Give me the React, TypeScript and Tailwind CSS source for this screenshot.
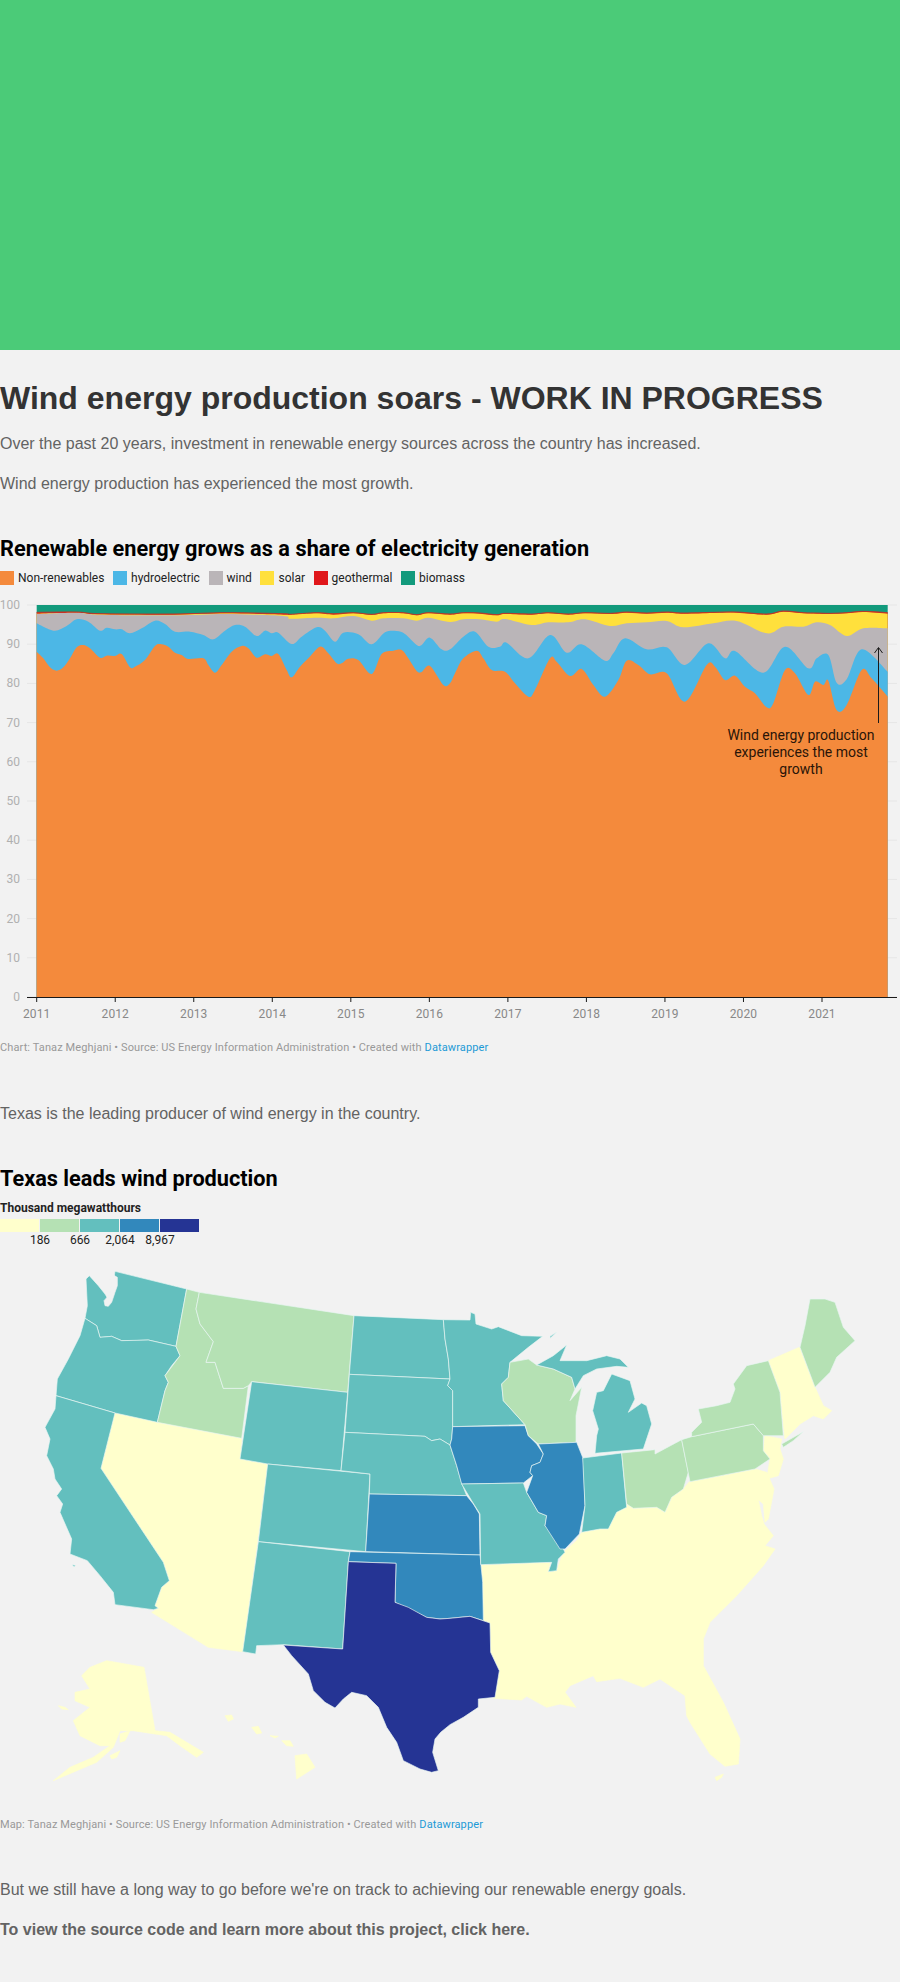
import React from "react";

type P = [number, number];

// Catmull-Rom smoothing through traced boundary points
function smooth(pts: P[]): string {
  let d = `M${pts[0][0]},${pts[0][1]}`;
  for (let i = 0; i < pts.length - 1; i++) {
    const p0 = pts[i - 1] || pts[i];
    const p1 = pts[i];
    const p2 = pts[i + 1];
    const p3 = pts[i + 2] || p2;
    const c1x = p1[0] + (p2[0] - p0[0]) / 6;
    const c1y = p1[1] + (p2[1] - p0[1]) / 6;
    const c2x = p2[0] - (p3[0] - p1[0]) / 6;
    const c2y = p2[1] - (p3[1] - p1[1]) / 6;
    d += `C${c1x},${c1y} ${c2x},${c2y} ${p2[0]},${p2[1]}`;
  }
  return d;
}

const flat = (a: number[]): P[] => {
  const r: P[] = [];
  for (let i = 0; i < a.length; i += 2) r.push([a[i], a[i + 1]]);
  return r;
};

// west half in crop coords x/3, y/3; east half offset by 450
const boundary = (west: number[], east: number[]): P[] => [
  ...flat(west).map(([x, y]) => [x / 3, y / 3] as P),
  ...flat(east).map(([x, y]) => [450 + x / 3, y / 3] as P),
];

const orange = boundary(
  [110,185,130,205,150,232,170,242,190,232,210,205,230,172,250,165,270,175,300,203,320,197,345,198,365,192,390,232,405,230,435,210,465,168,485,163,505,170,525,188,545,195,565,207,610,205,625,225,645,248,665,225,695,185,725,168,745,175,770,203,795,193,815,198,835,192,860,240,875,262,900,230,925,205,960,170,985,190,1010,220,1025,220,1045,206,1075,210,1115,252,1145,192,1180,182,1205,180,1225,205,1250,243,1265,246,1290,228,1330,285],
  [0,280,15,250,40,205,80,182,100,205,125,240,165,245,195,280,235,320,255,300,300,205,320,215,360,258,395,237,430,285,465,320,505,270,530,212,565,225,600,253,650,250,705,335,770,225,795,230,825,270,855,257,885,290,915,310,950,352,970,340,1005,240,1035,250,1075,315,1095,275,1120,285,1135,272,1160,360,1190,345,1235,240,1265,265,1313,320]
);
const blue = boundary(
  [110,100,130,110,165,122,200,108,230,88,265,95,300,122,320,113,345,118,365,118,390,130,425,115,465,92,495,102,525,125,570,125,610,135,640,148,675,122,705,105,735,110,770,138,795,122,815,130,835,128,875,162,905,140,950,112,975,122,1005,155,1030,128,1075,133,1115,163,1155,127,1190,123,1215,132,1250,165,1265,165,1290,143,1325,178],
  [0,178,40,140,75,125,115,170,150,170,170,158,235,205,300,135,350,188,395,163,465,212,490,190,525,145,590,178,650,172,705,225,775,160,825,205,855,183,940,248,1005,170,1075,235,1100,205,1135,195,1160,278,1190,268,1235,178,1313,245]
);
const gray = boundary(
  [110,72,230,68,300,74,520,76,680,72,850,78,870,86,950,83,1000,85,1060,78,1115,92,1150,85,1210,85,1250,92,1285,83,1350,96],
  [40,88,90,88,140,95,165,87,245,105,295,97,355,97,405,88,480,108,530,100,590,97,650,93,700,112,790,100,860,93,950,130,1000,110,1060,110,1100,97,1140,105,1190,138,1240,115,1313,115]
);
const yellow = boundary(
  [110,71,230,68,300,73,520,74,680,70,850,74,870,74,950,70,1000,74,1060,70,1115,75,1150,70,1210,70,1250,76,1285,70,1350,74],
  [40,70,90,71,140,76,165,72,245,74,295,70,355,74,405,70,480,72,530,68,590,71,650,68,700,71,790,69,860,68,950,74,1000,65,1060,70,1100,71,1140,72,1190,70,1240,66,1313,71]
);
const red = boundary(
  [110,67,230,66,300,71,520,72,680,68,850,71,870,73,950,68,1000,71,1060,68,1115,73,1150,68,1210,68,1250,74,1285,68,1350,72],
  [40,68,90,69,140,74,165,70,245,72,295,68,355,72,405,68,480,70,530,66,590,69,650,66,700,69,790,67,860,66,950,72,1000,63,1060,68,1100,69,1140,70,1190,68,1240,64,1313,68]
);

const area = (pts: P[]) => `${smooth(pts)}L${pts[pts.length - 1][0]},407L${pts[0][0]},407Z`;

const years = [2011, 2012, 2013, 2014, 2015, 2016, 2017, 2018, 2019, 2020, 2021];
const yticks = [100, 90, 80, 70, 60, 50, 40, 30, 20, 10, 0];

function AreaChart() {
  return (
    <svg width="900" height="440" viewBox="0 0 900 440" className="block">
      {yticks.map((v) => {
        const y = 407 - v * 3.92;
        return (
          <g key={v}>
            <line x1="27" x2="897" y1={y} y2={y} stroke="#e6e6e6" strokeWidth="1" />
            <text x="20" y={y + 4} textAnchor="end" fontSize="12" fill="#b0b0b0" fontFamily="Roboto, sans-serif">{v}</text>
          </g>
        );
      })}
      <rect x="36.7" y="15" width="851" height="392" fill="#129a7c" />
      <path d={area(red)} fill="#d8281f" />
      <path d={area(yellow)} fill="#ffe03c" />
      <path d={area(gray)} fill="#bab5b8" />
      <path d={area(blue)} fill="#4cb7e6" />
      <path d={area(orange)} fill="#f48a3c" />
      <path d={smooth(red)} fill="none" stroke="#b8392a" strokeWidth="1" />
      <line x1="27" x2="897" y1="407.5" y2="407.5" stroke="#1a1a1a" strokeWidth="1" />
      {years.map((yr, i) => {
        const x = 36.7 + i * 78.53;
        return (
          <g key={yr}>
            <line x1={x} x2={x} y1="407" y2="412" stroke="#1a1a1a" strokeWidth="1" />
            <text x={x} y="428" textAnchor="middle" fontSize="12" letterSpacing="0.1" fill="#888888" fontFamily="Roboto, sans-serif">{yr}</text>
          </g>
        );
      })}
      <path d="M878.5,133V58M874.5,63L878.5,57.5L882.5,63" fill="none" stroke="#1a1a1a" strokeWidth="1" />
      <g fontSize="14" fill="#2a1508" textAnchor="middle" fontFamily="Roboto, sans-serif">
        <text x="801" y="150">Wind energy production</text>
        <text x="801" y="167">experiences the most</text>
        <text x="801" y="184">growth</text>
      </g>
    </svg>
  );
}

const C = { y: "#ffffcc", g: "#b5e1b4", t: "#63bfbe", b: "#3288bc", d: "#253494" };
const BG = "#f2f2f2";

const poly = (a: number[]) => {
  const r: string[] = [];
  for (let i = 0; i < a.length; i += 2) r.push(`${a[i]},${a[i + 1]}`);
  return r.join(" ");
};

const states: { f: string; p: number[] }[] = [
  // South block and north-east yellow areas first
  { f: C.y, p: [1442,917,1650,910,1645,938,1670,935,1690,880,1730,845,1745,820,1800,810,1825,810,1850,760,1880,735,1970,745,1995,760,2015,715,2050,690,2068,668,2265,630,2300,640,2322,690,2305,780,2295,790,2290,735,2275,722,2285,770,2292,795,2320,830,2295,860,2325,870,2290,920,2210,1010,2130,1090,2110,1140,2110,1220,2170,1330,2220,1440,2215,1515,2175,1522,2130,1485,2070,1390,2060,1370,2055,1310,1980,1260,1930,1285,1860,1258,1790,1268,1780,1250,1710,1280,1695,1300,1728,1345,1680,1335,1640,1345,1580,1312,1565,1323,1480,1318,1498,1235,1472,1180,1470,1092,1450,1085,1448,970] },
  { f: C.y, p: [2145,1555,2170,1545,2165,1555,2150,1565] },
  { f: C.y, p: [2295,530,2345,540,2340,570,2350,600,2335,650,2300,660,2310,600,2290,575] },
  { f: C.y, p: [2305,305,2398,265,2445,385,2470,440,2495,455,2470,480,2440,470,2400,495,2355,540,2340,400] },
  { f: C.y, p: [345,462,725,538,720,600,803,615,728,1178,625,1165,455,1060,475,1048,465,1040,485,985,508,965,490,910,303,628] },
  // West
  { f: C.t, p: [345,37,560,90,528,262,445,243,400,245,365,245,335,232,300,235,290,200,255,178,262,140,258,60,268,50,295,80,315,105,330,130,345,37] },
  { f: BG, p: [325,55,340,48,352,55,352,80,345,100,335,130,325,142,315,140,312,125,330,105,335,70] },
  { f: C.t, p: [255,178,290,200,300,235,335,232,365,245,445,243,528,262,540,290,515,320,495,350,505,370,495,395,472,490,345,462,168,410,172,360,205,300,240,230] },
  { f: C.t, p: [168,410,345,462,303,628,490,910,508,965,485,985,465,1040,475,1048,460,1052,345,1037,340,1000,300,950,262,905,210,885,215,840,180,760,188,735,170,710,185,690,165,660,160,630,140,590,150,540,135,505,165,450] },
  { f: C.t, p: [218,917,226,919,224,923,219,922] },
  { f: C.g, p: [560,90,598,100,588,150,600,195,640,248,618,310,645,310,670,388,730,388,745,380,725,538,472,490,495,395,505,370,495,350,540,290,528,262] },
  { f: C.g, p: [598,100,1062,170,1043,400,755,368,745,380,730,388,670,388,645,310,618,310,640,248,600,195,588,150] },
  { f: C.t, p: [755,368,1043,400,1023,635,803,615,720,600] },
  { f: C.t, p: [803,615,1110,645,1097,878,775,848] },
  { f: C.t, p: [775,848,1050,878,1045,908,1028,1170,850,1157,770,1160,767,1185,728,1178] },
  { f: C.t, p: [1062,170,1330,182,1335,240,1345,300,1350,360,1048,346] },
  { f: C.t, p: [1048,346,1350,360,1343,380,1358,395,1358,503,1355,540,1350,558,1320,540,1295,545,1275,532,1035,520] },
  { f: C.t, p: [1035,520,1275,532,1295,545,1320,540,1350,558,1370,620,1385,672,1400,710,1108,705,1110,645,1023,635] },
  { f: C.b, p: [1108,705,1400,710,1420,735,1438,765,1440,888,1097,878] },
  { f: C.b, p: [1050,878,1440,888,1448,970,1450,1085,1410,1072,1350,1078,1320,1080,1280,1075,1185,1030,1188,913,1045,908] },
  { f: C.d, p: [1045,908,1188,913,1185,1030,1225,1045,1280,1075,1320,1080,1350,1078,1410,1072,1470,1092,1472,1180,1498,1235,1485,1315,1435,1320,1435,1345,1390,1375,1350,1397,1322,1420,1305,1440,1298,1480,1315,1535,1295,1540,1260,1530,1210,1505,1190,1450,1160,1405,1135,1345,1100,1310,1055,1300,1030,1320,1005,1347,975,1330,940,1295,925,1245,875,1190,850,1158,1028,1170] },
  // Midwest
  { f: C.t, p: [1330,182,1410,183,1412,160,1425,165,1428,195,1475,210,1495,203,1565,230,1628,232,1585,265,1530,310,1525,355,1505,375,1510,425,1575,497,1358,503,1358,395,1343,380,1350,360,1345,300,1335,240] },
  { f: C.b, p: [1358,503,1575,500,1585,530,1610,555,1630,585,1620,610,1595,620,1590,640,1598,650,1570,672,1385,675,1370,620,1350,558,1355,540] },
  { f: C.t, p: [1385,675,1570,672,1580,700,1615,760,1640,770,1635,800,1680,850,1695,880,1675,900,1670,935,1645,938,1655,910,1442,917,1440,765,1415,725] },
  { f: C.g, p: [1530,310,1585,300,1610,318,1660,330,1715,355,1725,390,1710,425,1745,385,1728,470,1728,550,1615,555,1585,530,1575,497,1510,425,1505,375,1525,355] },
  { f: C.t, p: [1610,318,1660,290,1700,258,1680,305,1760,305,1820,290,1860,300,1885,325,1850,322,1790,330,1750,350,1725,390,1715,355,1660,330] },
  { f: C.t, p: [1650,232,1670,220,1650,238] },
  { f: C.t, p: [1835,345,1890,365,1905,420,1885,460,1925,432,1940,440,1955,495,1930,570,1785,583,1790,530,1795,510,1778,455,1790,400,1810,395] },
  { f: C.b, p: [1615,555,1730,550,1750,600,1755,740,1738,825,1695,870,1680,870,1635,800,1640,770,1615,760,1580,700,1598,650,1590,640,1595,620,1620,610,1630,585] },
  { f: C.t, p: [1748,597,1865,582,1880,745,1850,760,1825,810,1800,810,1745,820,1755,740] },
  // North-east
  { f: C.g, p: [1865,582,1965,572,1965,585,2045,542,2065,640,2050,690,2015,715,1995,760,1970,745,1900,748,1880,735] },
  { f: C.g, p: [2045,542,2075,533,2260,495,2290,530,2290,575,2310,600,2265,630,2070,668] },
  { f: C.g, p: [2075,520,2105,490,2095,450,2150,440,2190,430,2205,390,2200,375,2240,320,2305,305,2340,400,2350,530,2290,530,2260,495,2075,533] },
  { f: C.g, p: [2345,555,2410,518,2380,545,2350,565] },
  { f: C.g, p: [2430,120,2475,120,2505,130,2530,205,2565,245,2510,295,2490,340,2445,385,2400,265,2415,200] },
  // Alaska
  { f: C.y, p: [320,1205,432,1225,465,1415,510,1420,610,1480,590,1495,540,1460,500,1430,465,1425,400,1415,360,1415,340,1465,290,1510,160,1565,210,1525,280,1495,330,1460,300,1460,240,1430,220,1385,270,1345,225,1325,225,1300,270,1290,245,1250,270,1225] },
  { f: C.y, p: [175,1340,195,1345,205,1352,185,1350] },
  { f: C.y, p: [330,1490,360,1475,350,1495,335,1500] },
  { f: C.y, p: [360,1425,390,1415,375,1445,360,1450] },
  // Hawaii
  { f: C.y, p: [885,1490,920,1485,945,1525,890,1560] },
  { f: C.y, p: [675,1370,695,1368,700,1380,685,1387] },
  { f: C.y, p: [755,1405,775,1402,785,1422,770,1425] },
  { f: C.y, p: [810,1430,835,1432,825,1437] },
  { f: C.y, p: [845,1445,870,1445,880,1462,860,1460] },
];

function UsMap() {
  return (
    <svg width="900" height="550" viewBox="0 0 2700 1650" className="block">
      {states.map((s, i) => (
        <polygon
          key={i}
          points={poly(s.p)}
          fill={s.f}
          stroke={s.f === C.y || s.f === BG ? s.f : "#e9f6f3"}
          strokeWidth="2"
          strokeLinejoin="round"
        />
      ))}
    </svg>
  );
}

const legend: [string, string][] = [
  ["Non-renewables", "bg-[#f48a3c]"],
  ["hydroelectric", "bg-[#4cb7e6]"],
  ["wind", "bg-[#bab5b8]"],
  ["solar", "bg-[#ffe03c]"],
  ["geothermal", "bg-[#e0171b]"],
  ["biomass", "bg-[#129a7c]"],
];

const scale = ["bg-[#ffffcc]", "bg-[#b5e1b4]", "bg-[#63bfbe]", "bg-[#3288bc]", "bg-[#253494]"];
const scaleLabels = ["186", "666", "2,064", "8,967"];

const para = "text-[16px] leading-[24px] text-[#636363] font-['Liberation_Sans',sans-serif]";
const chartTitle = "font-['Roboto',sans-serif] font-bold text-black text-[21.7px] leading-[28px]";
const credit = "font-['Roboto',sans-serif] text-[11px] leading-[14px] tracking-[0.11px] text-[#999999]";

export default function App() {
  return (
    <div className="w-[900px] h-[1982px] bg-[#f2f2f2] overflow-hidden">
      <div className="h-[350px] bg-[#4bcb78]" />
      <h1 className="mt-[28px] h-[40px] leading-[40px] text-[32px] font-bold text-[#333333] font-['Liberation_Sans',sans-serif]">
        Wind energy production soars - WORK IN PROGRESS
      </h1>
      <p className={`${para} mt-[14px]`}>Over the past 20 years, investment in renewable energy sources across the country has increased.</p>
      <p className={`${para} mt-[16px]`}>Wind energy production has experienced the most growth.</p>
      <h2 className={`${chartTitle} tracking-[0.055px] mt-[39px]`}>Renewable energy grows as a share of electricity generation</h2>
      <div className="mt-[8px] h-[14px] flex items-center gap-[8.6px] font-['Roboto',sans-serif] text-[12px] text-[#222222]">
        {legend.map(([label, color]) => (
          <div key={label} className="flex items-center gap-[4px]">
            <span className={`w-[14px] h-[14px] ${color}`} />
            <span>{label}</span>
          </div>
        ))}
      </div>
      <div className="mt-[5px]">
        <AreaChart />
      </div>
      <p className={`${credit} mt-[11px]`}>
        Chart: Tanaz Meghjani • Source: US Energy Information Administration • Created with{" "}
        <span className="text-[#1d9ad6]">Datawrapper</span>
      </p>
      <p className={`${para} mt-[47px]`}>Texas is the leading producer of wind energy in the country.</p>
      <h2 className={`${chartTitle} mt-[39px]`}>Texas leads wind production</h2>
      <p className="mt-[8px] font-['Roboto',sans-serif] font-bold text-[12px] leading-[14px] text-[#222222]">Thousand megawatthours</p>
      <div className="mt-[4px] flex w-[199px] h-[13px] gap-[1px]">
        {scale.map((c) => (
          <span key={c} className={`flex-1 ${c}`} />
        ))}
      </div>
      <div className="relative h-[14px] mt-[1px] font-['Roboto',sans-serif] text-[12px] leading-[14px] text-[#222222]">
        {scaleLabels.map((l, i) => (
          <span key={l} className="absolute -translate-x-1/2" style={{ left: 40 * (i + 1) }}>{l}</span>
        ))}
      </div>
      <div className="mt-[12px]">
        <UsMap />
      </div>
      <p className={`${credit} mt-[9px]`}>
        Map: Tanaz Meghjani • Source: US Energy Information Administration • Created with{" "}
        <span className="text-[#1d9ad6]">Datawrapper</span>
      </p>
      <p className={`${para} mt-[46px]`}>But we still have a long way to go before we're on track to achieving our renewable energy goals.</p>
      <p className={`${para} mt-[16px] font-bold text-[#555555]`}>To view the source code and learn more about this project, click here.</p>
    </div>
  );
}
